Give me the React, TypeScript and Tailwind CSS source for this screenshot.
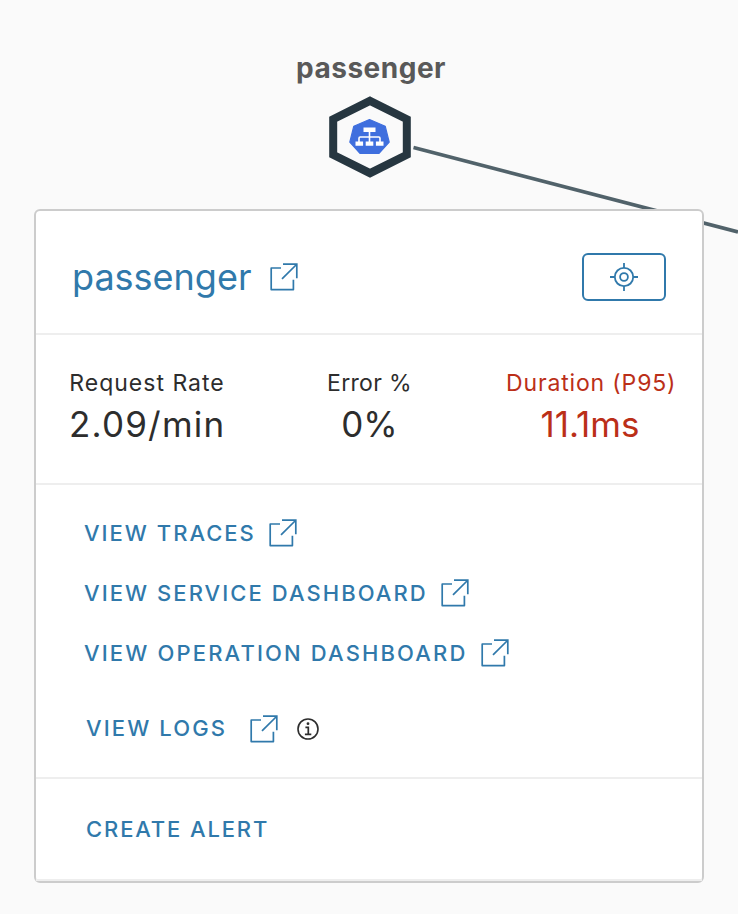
import React from "react";

function ExternalIcon({ className = "" }: { className?: string }) {
  return (
    <svg className={`h-7 w-7 shrink-0 ${className}`} viewBox="0 0 28 28" fill="none" stroke="currentColor" strokeWidth="1.7">
      <path d="M11 5H1.2v21.6h22.2V16.8" strokeLinejoin="round" />
      <path d="M13 1.2h13.8v14" />
      <path d="M12 15.8 26.5 1.5" />
    </svg>
  );
}

function TargetIcon() {
  return (
    <svg className="h-7 w-7" viewBox="0 0 28 28" fill="none" stroke="currentColor" strokeWidth="1.8">
      <circle cx="14" cy="14" r="9.2" />
      <circle cx="14" cy="14" r="3.9" />
      <path d="M14 0v5M14 23v5M0 14h5M23 14h5" />
    </svg>
  );
}

function InfoIcon() {
  return (
    <svg className="mt-px ml-[19px] h-[22px] w-[22px]" viewBox="0 0 22 22" fill="none" stroke="#2d2d2d">
      <circle cx="11" cy="11" r="10" strokeWidth="1.6" />
      <circle cx="11" cy="5.7" r="1.4" fill="#2d2d2d" stroke="none" />
      <path d="M8.4 9.3h2.9v7M7.9 16.3h6.4" strokeWidth="1.7" />
    </svg>
  );
}

function ServiceNode() {
  return (
    <svg className="h-[82px] w-[84px]" viewBox="0 0 84 82">
      <path d="M42 4.8 78.8 23.2V58.8L42 77.2 5.2 58.8V23.2Z" fill="#fafafa" stroke="#263640" strokeWidth="8" />
      <path d="M41.5 23.5 57.2 30.2 61.2 46.2 50.8 57.5H32.2L21.8 46.2 25.8 30.2Z" fill="#3f6fde" stroke="#3f6fde" strokeWidth="1.2" strokeLinejoin="round" />
      <path d="M41.5 34v14M31 49v-6.8q0-1.2 1.2-1.2h18.6q1.2 0 1.2 1.2V49" fill="none" stroke="#fff" strokeWidth="1.6" />
      <path d="M35.5 31.5h12v4.5h-12zM27.5 45.5h7.6v4.3h-7.6zM37.7 45.5h7.6v4.3h-7.6zM47.9 45.5h7.6v4.3h-7.6z" fill="#fff" />
    </svg>
  );
}

export default function App() {
  return (
    <div className="relative h-[914px] w-[738px] overflow-hidden bg-[#fafafa] font-['Inter',sans-serif] whitespace-nowrap text-[#2d2d2d]">
      <svg className="absolute inset-0 h-full w-full" viewBox="0 0 738 914">
        <path d="M413.5 147.5 738 232" stroke="#51626a" strokeWidth="3.7" />
      </svg>
      <div className="relative flex h-[209px] flex-col items-center pt-[48px] pl-[2px]">
        <div className="flex h-10 items-center pl-[2px] text-[28px] leading-10 font-bold tracking-[0.5px] text-[#595959]">passenger</div>
        <div className="mt-[8px]"><ServiceNode /></div>
      </div>
      <section className="relative ml-[34px] h-[674px] w-[670px] rounded-md border-2 border-[#ccc] bg-white">
        <header className="flex h-[124px] items-center justify-between border-b-2 border-[#eee] pr-[36px] pl-[36px] pt-[10px] text-[#3079ab]">
          <a className="flex items-center">
            <span className="w-[198px] text-[36px] leading-10">passenger</span>
            <ExternalIcon />
          </a>
          <button className="flex h-12 w-[84px] items-center justify-center rounded-md border-2 border-[#3079ab]"><TargetIcon /></button>
        </header>
        <div className="flex h-[150px] justify-between border-b-2 border-[#eee] pt-[32px] pr-[26px] pl-[33px] text-center">
          <div className="w-[156px]">
            <div className="text-[23px] leading-8 tracking-[1px]">Request Rate</div>
            <div className="text-[35px] leading-[50px] tracking-[1.2px]">2.09/min</div>
          </div>
          <div className="ml-[8px] w-[88px]">
            <div className="text-[23px] leading-8 tracking-[0.35px]">Error %</div>
            <div className="text-[35px] leading-[50px]">0%</div>
          </div>
          <div className="w-[170px] text-[#bb2f18]">
            <div className="text-[23px] leading-8 tracking-[0.85px]">Duration (P95)</div>
            <div className="pr-[2px] text-[35px] leading-[50px]">11.1ms</div>
          </div>
        </div>
        <nav className="flex h-[294px] flex-col border-b-2 border-[#eee] pt-[18px] pl-[48px] text-[22px] leading-[60px] font-medium text-[#3079ab]">
          <a className="flex h-[60px] items-center"><span className="w-[185px] tracking-[2px]">VIEW TRACES</span><ExternalIcon /></a>
          <a className="flex h-[60px] items-center"><span className="w-[357px] tracking-[2.06px]">VIEW SERVICE DASHBOARD</span><ExternalIcon /></a>
          <a className="flex h-[60px] items-center"><span className="w-[397px] tracking-[2.14px]">VIEW OPERATION DASHBOARD</span><ExternalIcon /></a>
          <a className="mt-[15px] ml-[2px] flex h-[60px] items-center"><span className="w-[164px] pb-px tracking-[2.1px]">VIEW LOGS</span><ExternalIcon className="mt-[2px]" /><InfoIcon /></a>
        </nav>
        <footer className="flex h-[102px] items-center border-b-2 border-[#eee] pl-[50px] text-[22px] font-medium tracking-[1.87px] text-[#3079ab]">CREATE ALERT</footer>
      </section>
    </div>
  );
}
